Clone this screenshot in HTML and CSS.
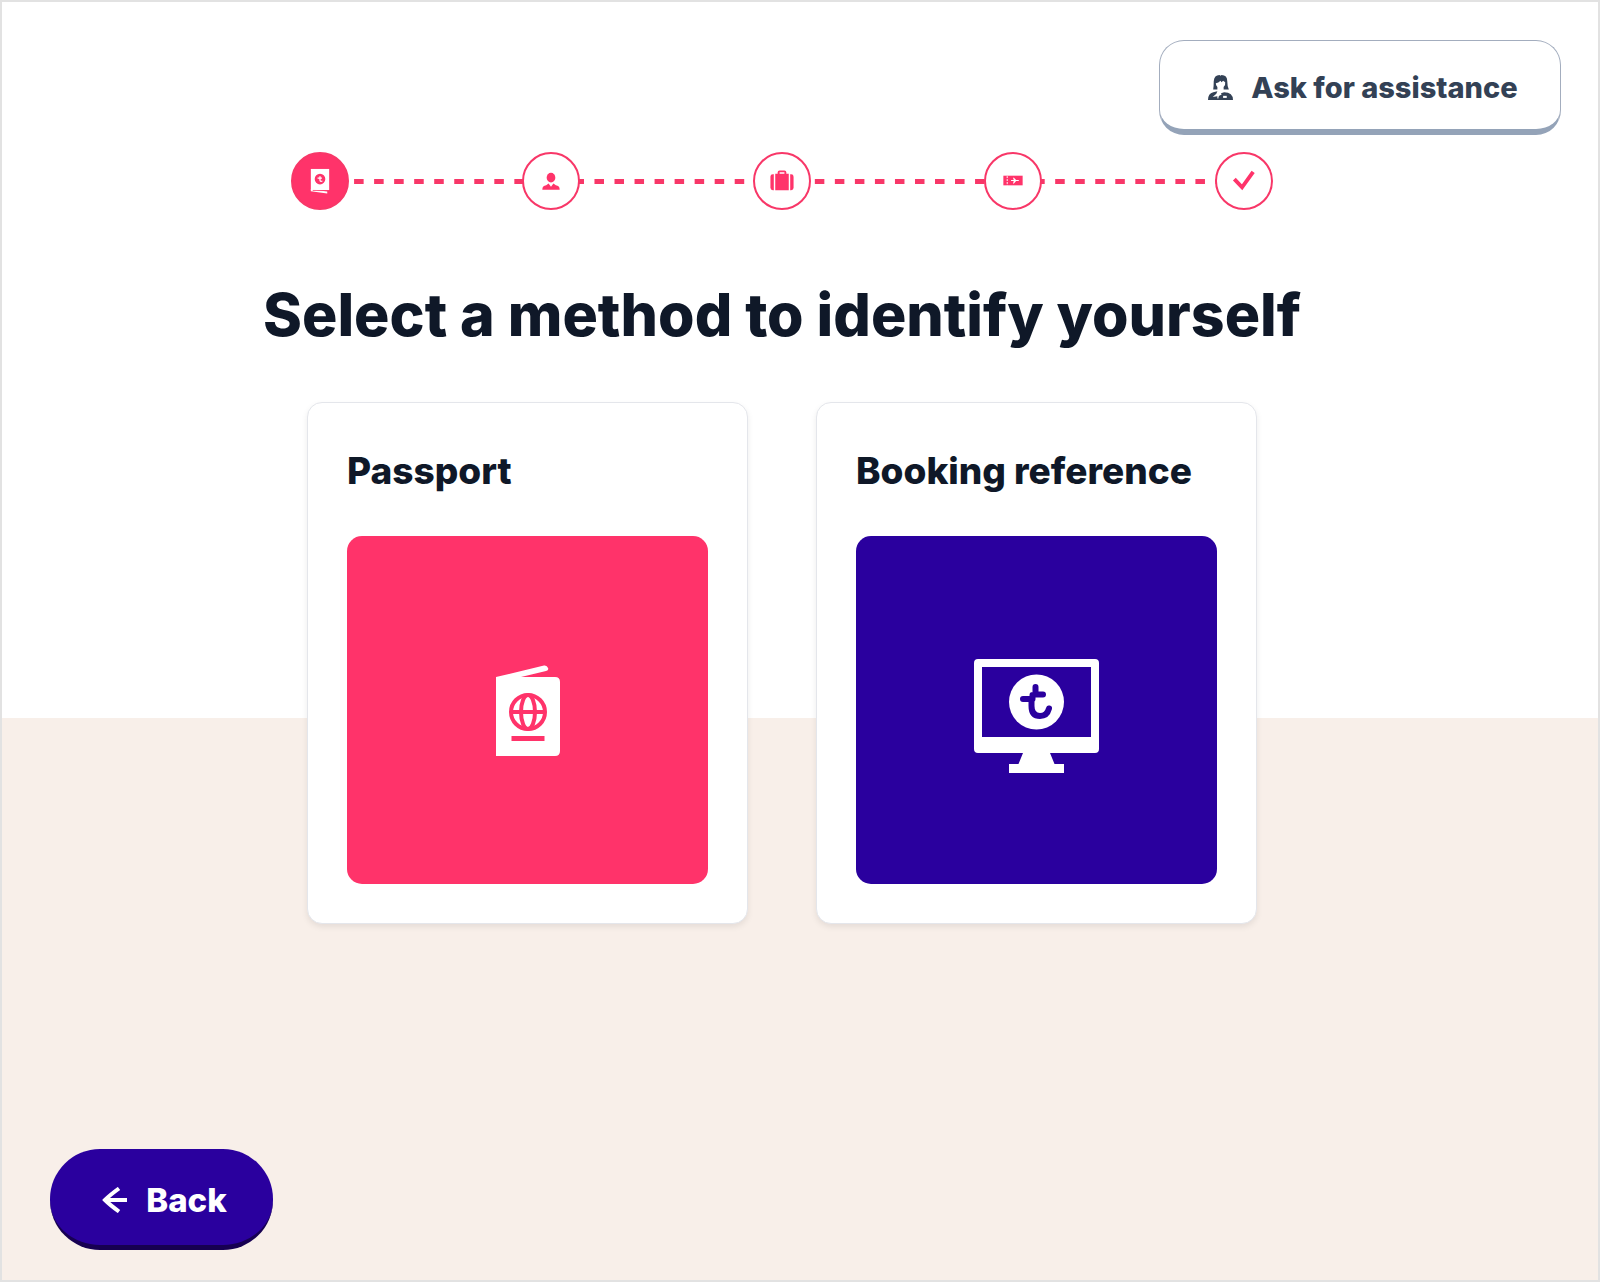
FILE: index.html
```html
<!DOCTYPE html>
<html lang="en">
<head>
    <meta charset="UTF-8">
    <meta name="viewport" content="width=device-width, initial-scale=1.0">
    <title>Select a method to identify yourself</title>
    <link rel="stylesheet" href="styles.css">
</head>
<body>

    <header class="topbar">
        <button type="button" class="btn btn-assist">
            <svg class="icon-agent" viewBox="0 0 24 24" aria-hidden="true">
                <path d="M5 14 Q5.500 11 5.500 6 Q6 0 11 0 L12 .8 L13 0 Q18.500 0 18.500 6 Q18.500 11 20 14 H15 V11.500 Q17 9.500 16.500 7 L14.500 5.500 L13 7 L12 5.500 Q10 7.500 7.500 8 Q7.500 10 9 11.500 V14 Z"/>
                <path d="M0 24 Q0 17.500 5 16.500 L9 15.500 L8 18 L4.500 21 L9 20.500 L9 24 Z"/>
                <path d="M8 22.500 H12 V24 H8 Z"/>
                <path d="M10 22 Q10 19.500 13 19 L12.500 17.500 L15.500 16.500 Q24 16.500 24 24 H10 Z"/>
                <path class="icon-line" d="M14.500 21 H18"/>
            </svg>
            <span>Ask for assistance</span>
        </button>
    </header>

    <main class="content">
        <ol class="steps">
            <li class="step active" aria-label="Identification">
                <svg viewBox="0 0 56 56" aria-hidden="true">
                    <path d="M18.500 15.500 H37.500 V37.500 H18.500 Z" fill="#fff"/>
                    <path d="M18.500 36.500 L35.500 39 V41 L18.500 38.500 Z" fill="#fff"/>
                    <path d="M20.500 37.800 L37.500 38" stroke="#ff336a" stroke-width=".8"/>
                    <circle cx="28" cy="26" r="5.500" fill="#ff336a"/>
                    <path d="M28 23 V27 Q28 29 30.500 28 M25.500 25 H30" fill="none" stroke="#fff" stroke-width="1.300"/>
                </svg>
            </li>
            <li class="step" aria-label="Passenger">
                <svg viewBox="0 0 56 56" aria-hidden="true">
                    <ellipse cx="28" cy="24.500" rx="4.500" ry="5"/>
                    <path d="M19 37 Q19 33 23 32.500 L25.500 30.500 L28 34 L30.500 30.500 L33 32.500 Q37 33 37 37 Z"/>
                </svg>
            </li>
            <li class="step" aria-label="Baggage">
                <svg viewBox="0 0 56 56" aria-hidden="true">
                    <path d="M19.500 21 V37.500 H18.500 Q16 37.500 16 35 V23.500 Q16 21 18.500 21 Z"/>
                    <path d="M21 37.500 V20.500 H23.500 V19 Q23.500 17 25.500 17 H30.500 Q32.500 17 32.500 19 V20.500 H35 V37.500 Z M25.500 20.500 H30.500 V19 H25.500 Z" fill-rule="evenodd"/>
                    <path d="M36.500 21 V37.500 H37.500 Q40 37.500 40 35 V23.500 Q40 21 37.500 21 Z"/>
                </svg>
            </li>
            <li class="step" aria-label="Boarding pass">
                <svg viewBox="0 0 56 56" aria-hidden="true">
                    <path d="M18 22.500 H38 V32.500 H18 Z"/>
                    <path d="M22 23 V32.500" stroke="#fff" stroke-dasharray="2 1"/>
                    <path d="M26 27 H28.800 L28 24.500 H29 L31.200 27 H34 V28 H31.200 L29 30.500 H28 L28.800 28 H26 Z" fill="#fff"/>
                </svg>
            </li>
            <li class="step" aria-label="Done">
                <svg viewBox="0 0 56 56" aria-hidden="true">
                    <path class="check" d="M18 26 L26 34.500 L37.500 18.500"/>
                </svg>
            </li>
        </ol>

        <h1>Select a method to identify yourself</h1>

        <div class="cards">
            <button type="button" class="card">
                <span class="card-title">Passport</span>
                <span class="card-image pink">
                    <svg class="icon-passport" viewBox="0 0 64 91" aria-hidden="true">
                        <path d="M0 12 L48 .5 Q51 0 52 3 Q53 5 50 6 L25 12 H59 Q64 12 64 17 V86 Q64 91 59 91 H0 Z" fill="#fff"/>
                        <g fill="none" stroke="#ff336a" stroke-width="4">
                            <circle cx="32" cy="47" r="17"/>
                            <ellipse cx="32" cy="47" rx="7" ry="17"/>
                            <path d="M15 47 H49"/>
                        </g>
                        <path d="M15.500 71 H48.500 V76 H15.500 Z" fill="#ff336a"/>
                    </svg>
                </span>
            </button>
            <button type="button" class="card">
                <span class="card-title">Booking reference</span>
                <span class="card-image blue">
                    <svg class="icon-screen" viewBox="0 0 125 114" aria-hidden="true">
                        <path d="M4 0 H121 Q125 0 125 4 V90 Q125 94 121 94 H76 L80.500 105 H90 V114 H35 V105 H44.500 L49 94 H4 Q0 94 0 90 V4 Q0 0 4 0 Z M8 8 V78 H117 V8 Z" fill="#fff" fill-rule="evenodd"/>
                        <circle cx="62.500" cy="43" r="27.500" fill="#fff"/>
                        <path d="M61.500 28 V35.500 M49 40 H57.500 V47 Q57.500 57 66 57 Q73 57 75 49.500 M61.500 35.500 H69 M58.500 36 V40" fill="none" stroke="#2a009e" stroke-width="6" stroke-linecap="round" stroke-linejoin="round"/>
                    </svg>
                </span>
            </button>
        </div>
    </main>

    <footer class="bottombar">
        <button type="button" class="btn btn-back">
            <svg class="icon-arrow" viewBox="0 0 26 26" aria-hidden="true">
                <path d="M25 13 H3 M17 1.500 Q8 8 3 13 Q8 18 17 24.500"/>
            </svg>
            <span>Back</span>
        </button>
    </footer>

</body>
</html>
```

FILE: styles.css
```css
* {
    box-sizing: border-box;
}

body {
    margin: 0;
    min-height: 100vh;
    display: flex;
    flex-direction: column;
    font-family: Inter, sans-serif;
    font-weight: 800;
    color: #0f1828;
    background: linear-gradient(to bottom, #fff 56%, #f8efe9 56%);
    border: 2px solid #e2e2e2;
}

button {
    font: inherit;
    color: inherit;
    cursor: pointer;
}

.topbar {
    display: flex;
    justify-content: flex-end;
    padding: 38px 37px 0;
}

.btn {
    display: flex;
    align-items: center;
    justify-content: center;
    gap: 18px;
    padding: 5px 0 0 6px;
}

.btn-assist {
    width: 402px;
    height: 95px;
    background: #fff;
    color: #334155;
    border: 1px solid #a3adbe;
    border-bottom: 6px solid #94a3b8;
    border-radius: 25px;
    font-size: 29px;
}

.icon-agent {
    width: 25px;
    height: 25px;
    fill: #334155;
}

.icon-line {
    stroke: #fff;
    stroke-width: 2;
}

.content {
    flex: 1;
    display: flex;
    flex-direction: column;
    align-items: center;
    padding: 17px 36px 0 0;
}

.steps {
    display: flex;
    justify-content: space-between;
    width: 982px;
    max-width: 100%;
    margin: 0;
    padding: 0;
    list-style: none;
    background-image: linear-gradient(to right, #f83768 50%, transparent 50%);
    background-size: 20px 5px;
    background-repeat: round no-repeat;
    background-position: 3px center;
}

.step {
    width: 58px;
    height: 58px;
    border: 2px solid #f83768;
    border-radius: 50%;
    background: #fff;
}

.step.active {
    background: #ff336a;
}

.step svg {
    display: block;
    width: 100%;
    height: 100%;
    fill: #ff336a;
}

.step .check {
    fill: none;
    stroke: #ff336a;
    stroke-width: 4;
}

h1 {
    margin: 69px 0 51px;
    font-size: 59px;
    line-height: 72px;
    font-weight: 800;
    text-align: center;
}

.cards {
    display: flex;
    gap: 68px;
}

.card {
    display: flex;
    flex-direction: column;
    gap: 39px;
    width: 441px;
    padding: 42px 39px 39px;
    background: #fff;
    border: 1px solid #e4e6eb;
    border-radius: 15px;
    box-shadow: 0 3px 6px rgba(0, 0, 0, 0.08);
    text-align: left;
}

.card-title {
    font-size: 37px;
    line-height: 52px;
}

.card-image {
    display: flex;
    align-items: center;
    justify-content: center;
    width: 100%;
    height: 348px;
    border-radius: 15px;
}

.pink {
    background: #ff336a;
}

.blue {
    background: #2a009e;
}

.icon-passport {
    width: 64px;
    height: 91px;
}

.icon-screen {
    width: 125px;
    height: 114px;
    margin-top: 12px;
}

.bottombar {
    padding: 0 48px 30px;
}

.btn-back {
    width: 223px;
    height: 101px;
    background: #2a009e;
    color: #fff;
    border: 0;
    border-bottom: 5px solid #170052;
    border-radius: 50px;
    font-size: 33px;
}

.icon-arrow {
    width: 26px;
    height: 26px;
    fill: none;
    stroke: #fff;
    stroke-width: 4;
}
```
